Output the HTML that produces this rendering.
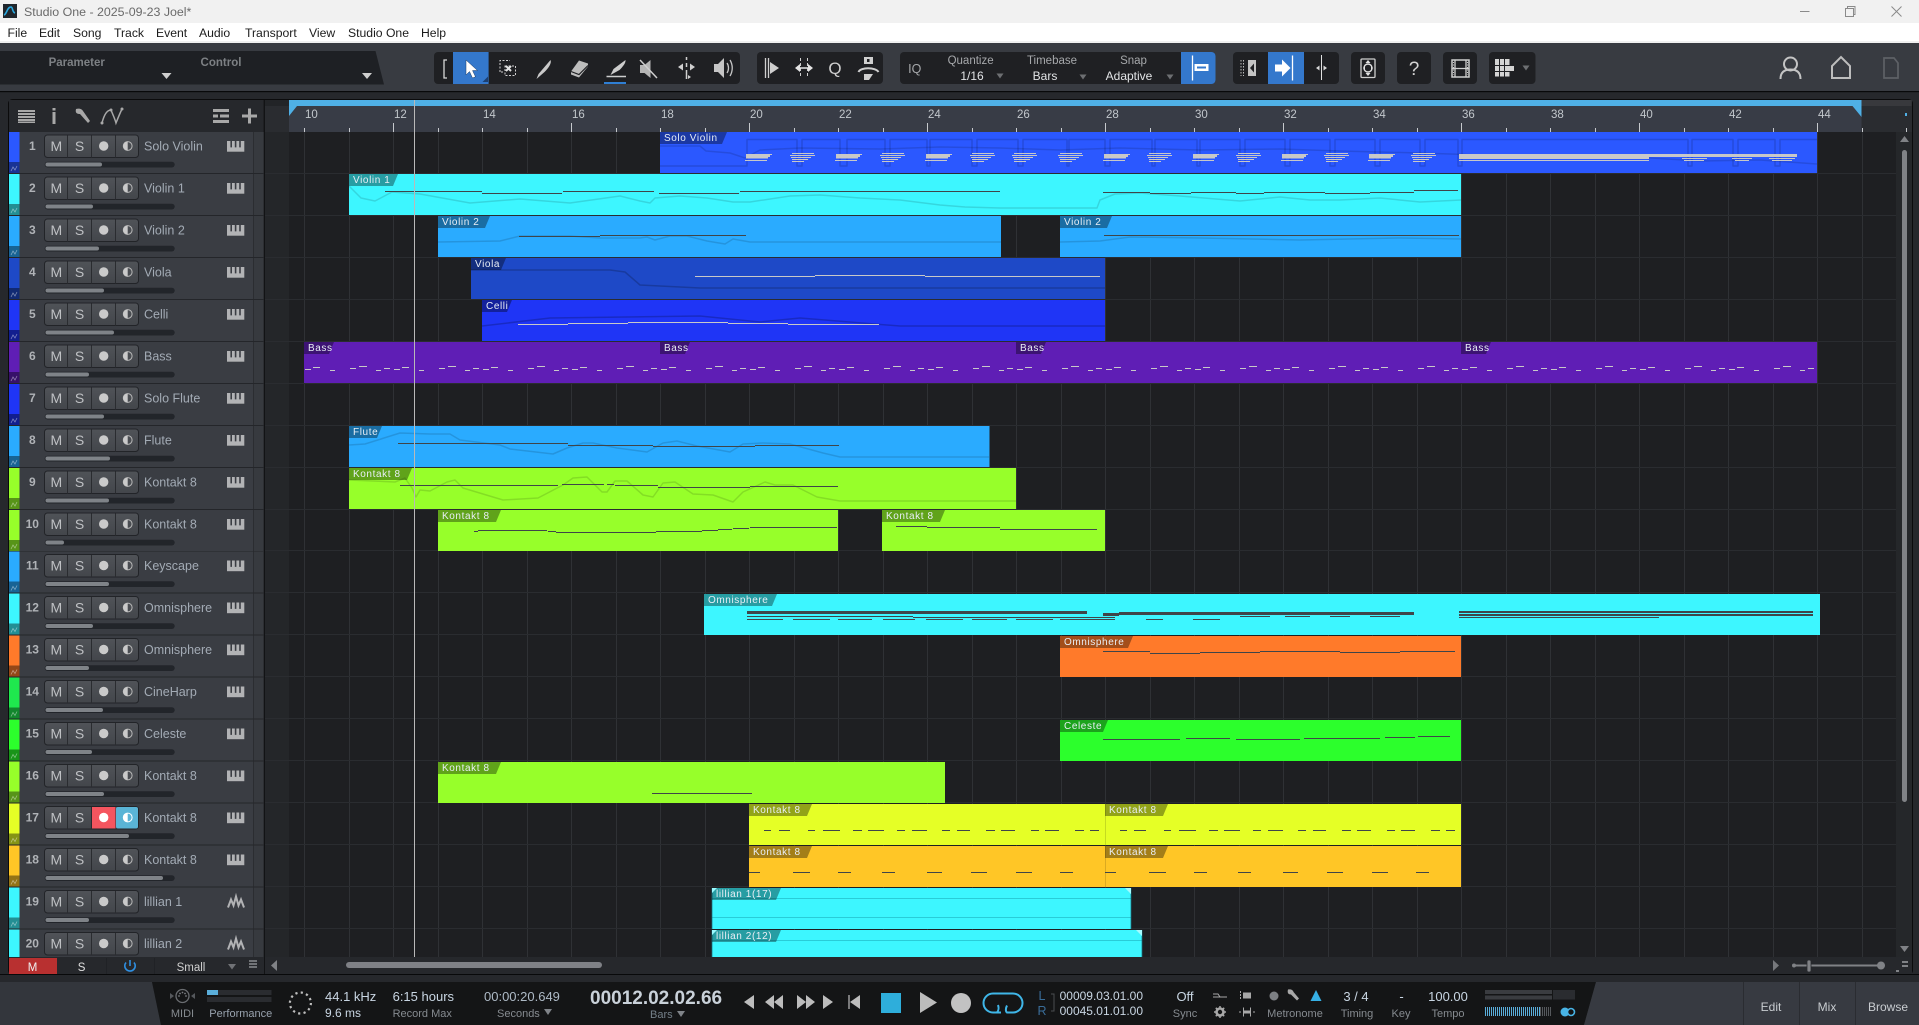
<!DOCTYPE html>
<html><head><meta charset="utf-8"><title>Studio One - 2025-09-23 Joel*</title>
<style>
html,body{margin:0;padding:0;background:#26282c;width:1919px;height:1025px;overflow:hidden}
svg{display:block;position:absolute;left:0;top:0}
text{font-family:"Liberation Sans",sans-serif;white-space:pre}
.m{font-size:12.2px;fill:#1c1c1c}
.n{font-size:12px;font-weight:bold;fill:#b0b3b7;text-anchor:middle}
.b{font-size:14px;fill:#bfc1c4;text-anchor:middle}
.tn{font-size:12.5px;fill:#a3abb5}
.l{font-size:10px;letter-spacing:.6px;fill:#e8eef5}
.rl{font-size:11.5px;fill:#c2c7cc}
.tb{font-size:11.5px;fill:#a6a8ab;text-anchor:middle}
.tv{font-size:12px;fill:#e2e4e6;text-anchor:middle}
.v{font-size:13px;fill:#c9d6e3}
.s{font-size:11px;fill:#868b90}
.sm{font-size:11px;fill:#868b90;text-anchor:middle}
.vm{font-size:13px;fill:#c9d6e3;text-anchor:middle}
</style></head><body>
<svg width="1919" height="1025" viewBox="0 0 1919 1025" xmlns="http://www.w3.org/2000/svg">
<defs>
<linearGradient id="bt" x1="0" y1="0" x2="0" y2="1"><stop offset="0" stop-color="#505358"/><stop offset="1" stop-color="#43464b"/></linearGradient>
<g id="r">
<rect x="19.5" width="244" height="42" fill="#3a3d43"/>
<rect x="253" width="10" height="42" fill="#373a3f"/>
<rect x="253" width="1" height="42" fill="#2b2d31"/>
<rect x="9" y="41" width="255" height="1" fill="#24262a"/>
<rect x="9" y="30" width="10.5" height="11" fill="#000" opacity=".42"/>
<path d="M11 39l2-4 2 3 2-4" fill="none" stroke="#fff" stroke-opacity=".45" stroke-width=".8"/>
<rect x="44.5" y="3" width="94" height="22.5" rx="3" fill="url(#bt)" stroke="#222428"/>
<path d="M67.5 3.5v22M91.5 3.5v22M115.5 3.5v22" stroke="#2a2c30" stroke-width="1"/>
<circle cx="103.7" cy="14" r="4.7" fill="#cacaca"/>
<circle cx="127.7" cy="14" r="4.4" fill="none" stroke="#b8b8b8"/>
<path d="M127.7 9.5a4.5 4.5 0 0 0 0 9z" fill="#cacaca"/>
<rect x="44.7" y="29.7" width="130" height="5.8" rx="2.9" fill="#22252a"/>
</g>
<g id="p"><rect x="227" y="9" width="17.3" height="10.7" fill="#b2b3b5"/><path d="M231.2 9v6.4M235.6 9v6.4M240 9v6.4" stroke="#3a3d43" stroke-width="1.6"/></g>
<path id="w" fill="none" stroke="#b2b3b5" stroke-width="2" d="M228 20L231 12 233.500 18 236 9 238.500 18 241 12 244 20"/>
<g id="c1" fill="#c8c8c8"><rect x="1" y="154" width="26" height="1"/><rect x="1" y="155" width="24" height="2"/><rect x="1" y="157" width="22" height="1.5"/><rect y="160" width="22" height="1"/></g>
<g id="c2" fill="#c8c8c8"><rect x="2" y="153" width="22" height="1"/><rect x="0" y="155" width="25" height="1"/><rect x="1" y="157" width="20" height="1"/><rect x="2" y="159" width="16" height="1"/><rect x="2" y="161" width="12" height="1"/></g>
<pattern id="bass" x="304" y="360" width="89" height="16" patternUnits="userSpaceOnUse">
<rect x="1" y="9" width="6" height="1" fill="#c8c8c8"/><rect x="9" y="7" width="7" height="1" fill="#c8c8c8"/><rect x="26" y="10" width="5" height="1" fill="#c8c8c8"/><rect x="46" y="8" width="6" height="1" fill="#c8c8c8"/><rect x="55" y="6" width="8" height="1" fill="#c8c8c8"/><rect x="72" y="10" width="5" height="1" fill="#c8c8c8"/><rect x="80" y="8" width="6" height="1" fill="#c8c8c8"/>
</pattern>
</defs>

<rect width="1919" height="1025" fill="#26282c"/>
<!-- title + menu -->
<rect width="1919" height="23" fill="#f1f1f1"/>
<rect y="23" width="1919" height="18" fill="#fff"/>
<rect y="41" width="1919" height="2" fill="#f0f0f0"/>
<rect x="3" y="4" width="14" height="14" fill="#20262c"/>
<path d="M4 15c3-1 3-8 7-8 2 0 1 5 4 6" fill="none" stroke="#2aa9e0" stroke-width="1.6"/>
<text x="24" y="16" font-size="12.4" fill="#6a6a6a">Studio One - 2025-09-23 Joel*</text>
<path d="M1800 11.5h9.5" stroke="#8a8a8a"/>
<path d="M1845.5 8.5h8v8h-8zM1847.5 8.500v-2h7.500v8h-2" fill="none" stroke="#8a8a8a"/>
<path d="M1891.500 6.500l10 10M1901.500 6.500l-10 10" stroke="#8a8a8a"/>
<text class="m" x="7.500" y="37">File</text><text class="m" x="39" y="37">Edit</text><text class="m" x="73" y="37">Song</text><text class="m" x="114" y="37">Track</text><text class="m" x="156" y="37">Event</text><text class="m" x="199" y="37">Audio</text><text class="m" x="245" y="37">Transport</text><text class="m" x="309" y="37">View</text><text class="m" x="348" y="37">Studio One</text><text class="m" x="421" y="37">Help</text>

<!-- toolbar -->
<rect y="43" width="1919" height="48" fill="#383b41"/>
<rect y="91" width="1919" height="1.200" fill="#08090a"/>
<path d="M0 51H375.500L384 84.500H0Z" fill="#1e2024"/>
<text x="76.700" y="66" font-size="11.500" font-weight="bold" fill="#7d8084" text-anchor="middle">Parameter</text>
<text x="221" y="66" font-size="11.500" font-weight="bold" fill="#7d8084" text-anchor="middle">Control</text>
<path d="M161.500 73h10l-5 6zM362 73h10l-5 6z" fill="#cfcfcf"/>

<g fill="#1f2023">
<rect x="434" y="52" width="306" height="32" rx="4"/>
<rect x="757" y="52" width="126" height="32" rx="4"/>
<rect x="900" y="52" width="315.500" height="32" rx="4"/>
<rect x="1233" y="52" width="106" height="32" rx="4"/>
<rect x="1351" y="52" width="34" height="32" rx="4"/>
<rect x="1397" y="52" width="34" height="32" rx="4"/>
<rect x="1443" y="52" width="34" height="32" rx="4"/>
<rect x="1489" y="52" width="46.500" height="32" rx="4"/>
</g>
<rect x="453" y="52" width="35.600" height="32" fill="#3478cc"/>
<path d="M482.500 82h5.500v-5.500z" fill="#1c3f70"/>
<path d="M447 60h-3v18h3" fill="none" stroke="#d8d8d8" stroke-width="1.300"/>
<path d="M466 60V75L469.500 71.500 472.500 78 475.500 76.700 472.500 70.500H477.500Z" fill="#fff" stroke="#1d3d66" stroke-width=".5"/>
<path d="M500 72V60.500H510M503 72H500" fill="none" stroke="#d0d0d0" stroke-dasharray="2 1.500"/>
<path d="M505 66h10.500v9.500H505z" fill="none" stroke="#d0d0d0" stroke-dasharray="2 1.500"/>
<path d="M506 66l5 5M511 66l-5 5" stroke="#e4e4e4" stroke-width="2"/>
<path d="M550.500 60c1.500 3-2 8-6 12l-8 7 2-5z" fill="#c9c9c9"/>
<path d="M579 60.500l9 3v3l-9 11-8-3v-3z" fill="#bdbdbd"/>
<path d="M571 71.500l8 3 9-9" fill="none" stroke="#1f2023" stroke-width="1.200"/>
<path d="M625.500 60c.5 3-3 7-6 10l-9 5 3-6z" fill="#cdcdcd"/>
<path d="M606.500 76.500h19.500" stroke="#cdcdcd" stroke-width="1.500"/>
<rect x="604" y="82" width="22" height="2" fill="#2f7fd4"/>
<path d="M640 65h4.500l6-5v18l-6-5H640z" fill="#b5b5b5"/>
<path d="M640 60l17 18" stroke="#cfcfcf" stroke-width="1.500"/>
<path d="M686.500 57v3M686.500 63v4M686.500 70v9" stroke="#d0d0d0" stroke-width="1.500"/>
<path d="M678 67l5-3.500v7zM695 67l-5-3.500v7zM688 75l3 2-3 2z" fill="#d0d0d0"/>
<path d="M714 64h4l6-6v20l-6-6h-4z" fill="#c6c6c6"/>
<path d="M727 63c2 3 2 7 0 10M730 60c3 5 3 11 0 16" fill="none" stroke="#c6c6c6" stroke-width="1.300"/>

<path d="M765.500 58v20M768.500 58v20" stroke="#cfcfcf" stroke-width="1.300"/>
<path d="M770 62l9 6-9 6z" fill="#cfcfcf"/>
<path d="M800.500 58v20M807.500 58v20" stroke="#cfcfcf" stroke-dasharray="3 2"/>
<path d="M795 68l5-4v8zM813 68l-5-4v8z" fill="#e4e4e4"/><path d="M798 68h12" stroke="#e4e4e4" stroke-width="1.500"/>
<text x="835" y="74" font-size="17" fill="#cfcfcf" text-anchor="middle">Q</text>
<path d="M864 57h9v7h-9z" fill="#cfcfcf"/><rect x="867" y="59" width="2.500" height="3" fill="#1f2023"/>
<path d="M858.500 72c2-5 17-5 20 0" fill="none" stroke="#cfcfcf" stroke-width="2"/>
<path d="M864 74h9l-4 6h-5z" fill="#cfcfcf"/>

<text x="914.700" y="73" font-size="12.500" fill="#a6a8ab" text-anchor="middle">IQ</text>
<text class="tb" x="970.600" y="64">Quantize</text><text class="tv" x="972" y="80">1/16</text>
<text class="tb" x="1052" y="64">Timebase</text><text class="tv" x="1045" y="80">Bars</text>
<text class="tb" x="1133.500" y="64">Snap</text><text class="tv" x="1129" y="80">Adaptive</text>
<path d="M996.500 73.500h7l-3.500 5zM1079.500 74.500h7l-3.500 5zM1166.500 74.500h7l-3.500 5z" fill="#6d6f72"/>
<path d="M1181 52h30.500a4 4 0 0 1 4 4v24a4 4 0 0 1-4 4H1181z" fill="#3478cc"/>
<path d="M1192.500 55.500v25" stroke="#fff" stroke-width="1.300"/>
<rect x="1194.500" y="64" width="14" height="7" fill="#fff"/><rect x="1197" y="66.500" width="9" height="2" fill="#3478cc"/>

<path d="M1241 60v16M1243.500 60v16" stroke="#bbb" stroke-dasharray="1.500 1.500"/>
<rect x="1248" y="60" width="8" height="16" fill="#c4c4c4"/><path d="M1254 63.500l-4 4.500 4 4.500z" fill="#1f2023"/>
<rect x="1268" y="52" width="36" height="32" fill="#3478cc"/>
<path d="M1275 64.500h7v-5l8.500 8.500-8.500 8.500v-5h-7z" fill="#fff"/>
<path d="M1292.500 55.500v25" stroke="#fff" stroke-width="1.300"/>
<path d="M1321.500 55v25" stroke="#e0e0e0" stroke-width="1"/>
<path d="M1316 68l3.500-2.500v5zM1327 68l-3.500-2.500v5z" fill="#d8d8d8"/>
<rect x="1361" y="59" width="14" height="18.500" rx="1" fill="none" stroke="#cfcfcf" stroke-width="1.300"/>
<circle cx="1368" cy="68" r="4" fill="none" stroke="#e2e2e2" stroke-width="1.400"/>
<path d="M1368 60l2.500 3h-5zM1368 76l2.500-3h-5zM1363 68l2-2v4zM1373 68l-2-2v4z" fill="#e2e2e2"/>
<text x="1414" y="75" font-size="19" fill="#d4d4d4" text-anchor="middle">?</text>
<rect x="1452" y="60" width="17" height="17" fill="none" stroke="#cfcfcf" stroke-width="1.500"/>
<path d="M1455 60v17M1466 60v17M1452 68.500h17" stroke="#cfcfcf" stroke-width="1.300"/>
<path d="M1453.500 62v13M1467.500 62v13" stroke="#cfcfcf" stroke-dasharray="1 1.500"/>
<g fill="#d4d4d4"><rect x="1495" y="59" width="4" height="6"/><rect x="1500" y="59" width="4" height="6"/><rect x="1495" y="66" width="4" height="5"/><rect x="1500" y="66" width="4" height="5"/><rect x="1495" y="72" width="4" height="4.500"/><rect x="1500" y="72" width="4" height="4.500"/><rect x="1505" y="59" width="4.500" height="6"/><rect x="1505" y="66" width="9" height="5"/><rect x="1505" y="72" width="4.500" height="4.500"/></g>
<path d="M1522.500 65.500h7l-3.500 5z" fill="#6d6f72"/>

<circle cx="1790.500" cy="64" r="6.500" fill="none" stroke="#c4c4c4" stroke-width="2"/>
<path d="M1780.500 79c0-7 4-9.500 10-9.500s10 2.500 10 9.500" fill="none" stroke="#c4c4c4" stroke-width="2"/>
<path d="M1832 78V66l9-9 9 9v12z" fill="none" stroke="#bdbdbd" stroke-width="2"/>
<path d="M1884 58h10l4 5v15h-14z" fill="none" stroke="#5e6166" stroke-width="1.700"/>

<!-- panel -->
<rect x="8.500" y="99.500" width="1904" height="875" rx="4" fill="#1e1f22" stroke="#0b0b0c"/>
<rect x="9" y="100" width="254" height="32" fill="#26282c"/>
<g fill="#a8a8a8">
<rect x="18" y="110" width="17" height="2"/><rect x="18" y="113" width="17" height="2"/><rect x="18" y="116" width="17" height="2"/><rect x="18" y="119" width="17" height="2"/><rect x="18" y="121.500" width="17" height="1.500"/>
<rect x="52.500" y="108" width="3" height="2.500"/><rect x="52.500" y="112" width="3" height="12"/>
<rect x="213" y="109" width="16" height="3"/><rect x="213" y="114.500" width="5" height="3"/><rect x="220" y="114.500" width="9" height="3"/><rect x="213" y="120" width="16" height="3"/>
<rect x="242" y="114.500" width="15" height="3"/><rect x="248" y="108.500" width="3" height="15"/>
</g>
<path d="M76 109c3-1 6 0 7 2l7 10-2 2-8-9c-3 0-5-1-4-5z" fill="#a8a8a8"/>
<path d="M102 123c2-8 5-13 9-13 2 5 4 9 5 13 2-5 4-10 6-14" fill="none" stroke="#a8a8a8" stroke-width="1.500"/>
<circle cx="102" cy="123" r="1.500" fill="#a8a8a8"/><circle cx="111" cy="110" r="1.500" fill="#a8a8a8"/><circle cx="122" cy="109" r="1.500" fill="#a8a8a8"/>

<!-- ruler -->
<rect x="264" y="100" width="1648" height="32" fill="#2a2c30"/>
<rect x="264" y="100" width="25" height="6" fill="#222427"/>
<rect x="1861.500" y="100" width="50" height="6" fill="#38393d"/>
<rect x="289" y="106" width="1572.500" height="26" fill="#383c46"/>
<rect x="289" y="100" width="1572.500" height="6" fill="#4fb0e6"/>
<path d="M289 106h8l-8 10zM1861.500 106h-9l9 11z" fill="#4fb0e6"/>
<path d="M1907 113h-2v3h2z" fill="#4fb0e6"/>
<!-- grid -->
<rect x="264" y="132" width="25" height="825" fill="#242629"/>
<rect x="1896" y="132" width="16" height="825" fill="#25272a"/>
<path shape-rendering="crispEdges" stroke="#2f3135" d="M304.500 132V957M349.500 132V957M393.500 132V957M438.500 132V957M482.500 132V957M527.500 132V957M571.500 132V957M616.500 132V957M660.500 132V957M705.500 132V957M749.500 132V957M794.500 132V957M838.500 132V957M883.500 132V957M927.500 132V957M972.500 132V957M1016.500 132V957M1061.500 132V957M1105.500 132V957M1150.500 132V957M1194.500 132V957M1239.500 132V957M1283.500 132V957M1328.500 132V957M1372.500 132V957M1417.500 132V957M1461.500 132V957M1506.500 132V957M1550.500 132V957M1595.500 132V957M1639.500 132V957M1684.500 132V957M1728.500 132V957M1773.500 132V957M1817.500 132V957M1862.500 132V957"/>
<path shape-rendering="crispEdges" stroke="#2a2c30" d="M264 173.500H1896M264 215.500H1896M264 257.500H1896M264 299.500H1896M264 341.500H1896M264 383.500H1896M264 425.500H1896M264 467.500H1896M264 509.500H1896M264 550.500H1896M264 592.500H1896M264 634.500H1896M264 676.500H1896M264 718.500H1896M264 760.500H1896M264 802.500H1896M264 844.500H1896M264 886.500H1896M264 928.500H1896"/>
<!-- ticks -->
<path shape-rendering="crispEdges" stroke="#c6c9cd" d="M304.500 128V132M349.500 128V132M438.500 128V132M482.500 128V132M527.500 128V132M616.500 128V132M660.500 128V132M705.500 128V132M794.500 128V132M838.500 128V132M883.500 128V132M972.500 128V132M1016.500 128V132M1061.500 128V132M1150.500 128V132M1194.500 128V132M1239.500 128V132M1328.500 128V132M1372.500 128V132M1417.500 128V132M1506.500 128V132M1550.500 128V132M1595.500 128V132M1684.500 128V132M1728.500 128V132M1773.500 128V132M1862.500 128V132M1906.500 128V132M393.500 123V132M571.500 123V132M749.500 123V132M927.500 123V132M1105.500 123V132M1283.500 123V132M1461.500 123V132M1639.500 123V132M1817.500 123V132"/>
<g class="rl">
<text class="rl" x="305" y="118">10</text><text class="rl" x="394" y="118">12</text><text class="rl" x="483" y="118">14</text><text class="rl" x="572" y="118">16</text><text class="rl" x="661" y="118">18</text><text class="rl" x="750" y="118">20</text><text class="rl" x="839" y="118">22</text><text class="rl" x="928" y="118">24</text><text class="rl" x="1017" y="118">26</text><text class="rl" x="1106" y="118">28</text><text class="rl" x="1195" y="118">30</text><text class="rl" x="1284" y="118">32</text><text class="rl" x="1373" y="118">34</text><text class="rl" x="1462" y="118">36</text><text class="rl" x="1551" y="118">38</text><text class="rl" x="1640" y="118">40</text><text class="rl" x="1729" y="118">42</text><text class="rl" x="1818" y="118">44</text>
</g>

<!-- clips -->
<g shape-rendering="crispEdges">
<rect x="660" y="132" width="1157" height="41" fill="#2b58ff"/>
<rect x="349" y="174" width="1112" height="41" fill="#3df6ff"/>
<rect x="438" y="216" width="563" height="41" fill="#2aabff"/>
<rect x="1060" y="216" width="401" height="41" fill="#2aabff"/>
<rect x="471" y="258" width="634" height="41" fill="#1e49c7"/>
<rect x="482" y="300" width="623" height="41" fill="#1f35f6"/>
<rect x="304" y="342" width="1513" height="41" fill="#5f1eb5"/>
<rect x="349" y="426" width="640.500" height="41" fill="#2aabff"/>
<rect x="349" y="468" width="667" height="41" fill="#97ff2a"/>
<rect x="438" y="510" width="400" height="41" fill="#97ff2a"/>
<rect x="882" y="510" width="223" height="41" fill="#97ff2a"/>
<rect x="704" y="594" width="1116" height="41" fill="#3df6ff"/>
<rect x="1060" y="636" width="401" height="41" fill="#ff7a2a"/>
<rect x="1060" y="720" width="401" height="41" fill="#2cff2c"/>
<rect x="438" y="762" width="507" height="41" fill="#97ff2a"/>
<rect x="749" y="804" width="712" height="41" fill="#e5ff26"/>
<rect x="749" y="846" width="712" height="41" fill="#ffc626"/>
<rect x="712" y="888" width="419" height="41" fill="#3df6ff"/>
<rect x="712" y="930" width="430" height="30" fill="#3df6ff"/>
<path d="M1105.500 804V845M1105.500 846V887" stroke="#000" stroke-opacity=".14"/>
</g>

<!-- automation curves -->
<g fill="none" stroke="#000" stroke-opacity=".13" stroke-width="1.500" stroke-linejoin="round">
<path stroke-opacity=".14" d="M660 166H747V139.500H797V166H802V139.500H840V166H847V139.500H885V166H890V139.500H927V166H930V139.500H972V166H977V139.500H1018V166H1023V139.500H1067V166H1069V139.500H1105V166H1110V139.500H1152V166H1155V139.500H1197V166H1200V139.500H1240V166H1245V139.500H1285V166H1290V139.500H1330V166H1335V139.500H1375V166H1380V139.500H1420V166H1425V139.500H1458V166H1462V139.500H1688V166H1692V139.500H1733V166H1738V139.500H1775V166H1780V139.500H1817"/>
<path d="M660 146H700L706 151 730 153 745 158 760 150 800 148 880 149 940 147 1000 148 1060 150 1120 148 1200 150 1280 149 1340 151 1420 153 1480 155 1600 156 1650 158 1700 161 1760 160 1817 164"/>
<path d="M349 186 361 198 375 201 392 192 420 194 470 203 520 199 570 203 620 196 640 201 650 203 655 198 680 196 707 198 733 202 750 202 790 196 820 195 860 198 900 200 940 205 965 207 1000 208 1097 208 1100 200 1115 194 1140 193 1180 196 1240 201 1280 197 1310 200 1340 200 1380 198 1420 202 1461 200"/>
<path d="M438 242 500 241 520 236 570 236 600 238 640 238 647 237 655 240 670 236 687 236 707 241 725 244 733 239 750 242 1001 242"/>
<path d="M1060 242 1100 241 1130 237 1200 238 1300 240 1400 238 1461 239"/>
<path stroke-opacity=".2" d="M471 270 610 270 625 272 640 285 700 288 1105 288"/>
<path stroke-opacity=".2" d="M482 326 550 318 700 316 760 322 800 318 900 326 1105 326"/>
<path d="M349 445 365 444 400 433 430 434 450 434 460 440 500 445 510 449 553 454 567 448 583 443 593 443 617 448 647 452 663 443 677 441 697 446 730 452 743 444 763 443 790 444 823 453 840 457 989 457"/>
<path d="M349 480 395 482 405 478 412 488 416 497 420 490 430 491 447 482 455 480 463 488 503 500 538 498 563 485 573 478 587 477 602 492 607 492 615 481 627 481 643 495 653 497 663 483 675 482 693 494 713 495 733 502 743 492 765 482 775 485 793 485 817 497 840 501 1016 501"/>
<path d="M712 898.500H1131M712 917.500H1131M712 940.500H1142" stroke="#1aa9b8" stroke-opacity=".55" stroke-width="1"/>
<path d="M712 888V929M1131 888V929M712 930V957M1142 930V957" stroke="#1a6f7f" stroke-opacity=".75" stroke-width="1"/>
</g>

<!-- notes -->
<g fill="#c8c8c8">
<use href="#c1" x="745"/><use href="#c2" x="790"/><use href="#c1" x="835"/><use href="#c2" x="880"/><use href="#c1" x="925"/><use href="#c2" x="970"/><use href="#c2" x="1012"/><use href="#c2" x="1058"/><use href="#c1" x="1103"/><use href="#c2" x="1147"/><use href="#c1" x="1192"/><use href="#c2" x="1236"/><use href="#c1" x="1281"/><use href="#c2" x="1324"/><use href="#c1" x="1368"/><use href="#c2" x="1411"/>
<rect x="1459" y="154" width="190" height="5"/><rect x="1459" y="160" width="190" height="1"/>
<rect x="1649" y="154" width="148" height="3"/>
<rect x="1682" y="158" width="25" height="1"/><rect x="1684" y="160" width="20" height="1"/>
<rect x="1732" y="158" width="20" height="1"/><rect x="1735" y="160" width="14" height="1"/>
<rect x="1769" y="158" width="26" height="1"/><rect x="1772" y="160" width="20" height="1"/>
<rect x="695" y="276" width="120" height="1"/><rect x="815" y="275" width="110" height="1"/><rect x="925" y="276" width="175" height="1"/>
<rect x="518" y="324" width="50" height="1"/><rect x="568" y="323" width="60" height="1"/><rect x="628" y="322" width="100" height="1"/><rect x="728" y="323" width="60" height="1"/><rect x="788" y="324" width="91" height="1"/>
<rect x="304" y="360" width="1513" height="16" fill="url(#bass)"/>
</g>
<path shape-rendering="crispEdges" fill="none" stroke="#3f4549" d="M385 191.500H482M482 193.500H562M563 191.500H654M659 193.500H739M740 191.500H1000M1103 192.500H1150M1150 193.500H1191M1191 192.500H1236M1236 193.500H1264M1264 192.500H1325M1325 193.500H1370M1370 192.500H1414M1414 190.500H1458
M519 236.500H600M600 235.500H746M1104 235.500H1459
M398 443.500H568M568 445.500H653M653 446.500H755M755 445.500H839
M400 485.500H558M562 484.500H604M607 484.500H614M615 485.500H658M658 487.500H750M750 486.500H838
M474 531.500H478M478 530.500H547M548 531.500H556M556 532.500H656M656 531.500H702M702 530.500H718M718 529.500H732M733 528.500H749M750 527.500H837M896 526.500H927M927 527.500H1000M1000 529.500H1097
M747 616.500H913M913 617.500H1115M747 619.500H783M793 619.500H830M838 619.500H872M883 619.500H915M926 619.500H963M972 619.500H1007M1016 619.500H1053M1060 619.500H1115M1146 619.500H1163M1193 619.500H1220M1240 616.500H1270M1285 616.500H1310M1330 616.500H1350M1370 616.500H1400
M1103 651.500H1150M1150 653.500H1200M1200 652.500H1260M1260 651.500H1340M1340 652.500H1400M1400 651.500H1455
M1103 739.500H1180M1186 738.500H1230M1236 739.500H1300M1304 738.500H1380M1385 737.500H1415M1418 736.500H1450
M652 793.500H752
M764 830.500H771M779 830.500H790M808 830.500H815M823 830.500H840M853 830.500H862M868 830.500H884M897 830.500H905M912 830.500H927M942 830.500H950M957 830.500H970M986 830.500H995M1001 830.500H1015M1031 830.500H1039M1045 830.500H1059M1075 830.500H1084M1090 830.500H1099M1120 830.500H1127M1134 830.500H1146M1164 830.500H1171M1179 830.500H1196M1209 830.500H1218M1224 830.500H1240M1253 830.500H1261M1268 830.500H1283M1298 830.500H1306M1313 830.500H1326M1342 830.500H1351M1357 830.500H1371M1387 830.500H1395M1401 830.500H1415M1431 830.500H1440M1446 830.500H1455
M749 872.500H760M793 872.500H810M838 872.500H851M882 872.500H895M927 872.500H942M971 872.500H987M1016 872.500H1032M1060 872.500H1073M1105 872.500H1116M1149 872.500H1166M1194 872.500H1207M1238 872.500H1251M1283 872.500H1298M1327 872.500H1343M1372 872.500H1388M1416 872.500H1429"/>
<g fill="#3f4549">
<rect x="747" y="611" width="340" height="3"/><rect x="1103" y="613" width="16" height="3"/><rect x="1119" y="612" width="295" height="3"/>
<rect x="1459" y="611" width="354" height="2"/><rect x="1459" y="614" width="354" height="2"/><rect x="1459" y="617" width="200" height="1"/>
</g>

<!-- clip labels -->
<g fill="#000" fill-opacity=".36">
<path d="M660 132h67l-5 12h-62z"/><path d="M349 174h49l-5 12h-44z"/><path d="M438 216h52l-5 12h-47z"/><path d="M1060 216h52l-5 12h-47z"/><path d="M471 258h35l-5 12h-30z"/><path d="M482 300h30l-5 12h-25z"/>
<path d="M304 342h30l-5 12h-25z"/><path d="M660 342h30l-5 12h-25z"/><path d="M1016 342h30l-5 12h-25z"/><path d="M1461 342h30l-5 12h-25z"/>
<path d="M349 426h33l-5 12h-28z"/><path d="M349 468h63l-5 12h-58z"/><path d="M438 510h63l-5 12h-58z"/><path d="M882 510h63l-5 12h-58z"/>
<path d="M704 594h73l-5 12h-68z"/><path d="M1060 636h73l-5 12h-68z"/><path d="M1060 720h48l-5 12h-43z"/><path d="M438 762h63l-5 12h-58z"/>
<path d="M749 804h63l-5 12h-58z"/><path d="M1105 804h63l-5 12h-58z"/><path d="M749 846h63l-5 12h-58z"/><path d="M1105 846h63l-5 12h-58z"/>
<path d="M712 888h69l-5 12h-64z"/><path d="M712 930h69l-5 12h-64z"/>
</g>
<path d="M712 893v-5h5zM712 935v-5h5z" fill="#9bfaff"/>
<path d="M1131 888v6l-6-6zM1142 930v6l-6-6z" fill="#a7fbff"/>
<text class="l" x="664" y="141">Solo Violin</text><text class="l" x="353" y="183">Violin 1</text><text class="l" x="442" y="225">Violin 2</text><text class="l" x="1064" y="225">Violin 2</text><text class="l" x="475" y="267">Viola</text><text class="l" x="486" y="309">Celli</text>
<text class="l" x="308" y="351">Bass</text><text class="l" x="664" y="351">Bass</text><text class="l" x="1020" y="351">Bass</text><text class="l" x="1465" y="351">Bass</text>
<text class="l" x="353" y="435">Flute</text><text class="l" x="353" y="477">Kontakt 8</text><text class="l" x="442" y="519">Kontakt 8</text><text class="l" x="886" y="519">Kontakt 8</text>
<text class="l" x="708" y="603">Omnisphere</text><text class="l" x="1064" y="645">Omnisphere</text><text class="l" x="1064" y="729">Celeste</text><text class="l" x="442" y="771">Kontakt 8</text>
<text class="l" x="753" y="813">Kontakt 8</text><text class="l" x="1109" y="813">Kontakt 8</text><text class="l" x="753" y="855">Kontakt 8</text><text class="l" x="1109" y="855">Kontakt 8</text>
<text class="l" x="716" y="897">lillian 1(17)</text><text class="l" x="716" y="939">lillian 2(12)</text>

<!-- playhead -->
<path shape-rendering="crispEdges" d="M414.500 100V957" stroke="#b9b9b9"/>

<!-- tracks -->
<g transform="translate(0,132)"><rect x="9" width="10.500" height="42" fill="#2b58ff"/><use href="#r"/><rect x="45.500" y="30.500" width="56.500" height="4" rx="2" fill="#7f8388"/><text class="n" x="32.300" y="18">1</text><text class="b" x="56.300" y="19">M</text><text class="b" x="79.500" y="19">S</text><text class="tn" x="144" y="18.500">Solo Violin</text><use href="#p"/></g>
<g transform="translate(0,174)"><rect x="9" width="10.500" height="42" fill="#3df6ff"/><use href="#r"/><rect x="45.500" y="30.500" width="47.500" height="4" rx="2" fill="#7f8388"/><text class="n" x="32.300" y="18">2</text><text class="b" x="56.300" y="19">M</text><text class="b" x="79.500" y="19">S</text><text class="tn" x="144" y="18.500">Violin 1</text><use href="#p"/></g>
<g transform="translate(0,216)"><rect x="9" width="10.500" height="42" fill="#2aabff"/><use href="#r"/><rect x="45.500" y="30.500" width="53.500" height="4" rx="2" fill="#7f8388"/><text class="n" x="32.300" y="18">3</text><text class="b" x="56.300" y="19">M</text><text class="b" x="79.500" y="19">S</text><text class="tn" x="144" y="18.500">Violin 2</text><use href="#p"/></g>
<g transform="translate(0,258)"><rect x="9" width="10.500" height="42" fill="#1e49c7"/><use href="#r"/><rect x="45.500" y="30.500" width="58.500" height="4" rx="2" fill="#7f8388"/><text class="n" x="32.300" y="18">4</text><text class="b" x="56.300" y="19">M</text><text class="b" x="79.500" y="19">S</text><text class="tn" x="144" y="18.500">Viola</text><use href="#p"/></g>
<g transform="translate(0,300)"><rect x="9" width="10.500" height="42" fill="#1f35f6"/><use href="#r"/><rect x="45.500" y="30.500" width="68.500" height="4" rx="2" fill="#7f8388"/><text class="n" x="32.300" y="18">5</text><text class="b" x="56.300" y="19">M</text><text class="b" x="79.500" y="19">S</text><text class="tn" x="144" y="18.500">Celli</text><use href="#p"/></g>
<g transform="translate(0,342)"><rect x="9" width="10.500" height="42" fill="#5f1eb5"/><use href="#r"/><rect x="45.500" y="30.500" width="43.500" height="4" rx="2" fill="#7f8388"/><text class="n" x="32.300" y="18">6</text><text class="b" x="56.300" y="19">M</text><text class="b" x="79.500" y="19">S</text><text class="tn" x="144" y="18.500">Bass</text><use href="#p"/></g>
<g transform="translate(0,384)"><rect x="9" width="10.500" height="42" fill="#1f35f6"/><use href="#r"/><rect x="45.500" y="30.500" width="58.500" height="4" rx="2" fill="#7f8388"/><text class="n" x="32.300" y="18">7</text><text class="b" x="56.300" y="19">M</text><text class="b" x="79.500" y="19">S</text><text class="tn" x="144" y="18.500">Solo Flute</text><use href="#p"/></g>
<g transform="translate(0,426)"><rect x="9" width="10.500" height="42" fill="#2aabff"/><use href="#r"/><rect x="45.500" y="30.500" width="64.500" height="4" rx="2" fill="#7f8388"/><text class="n" x="32.300" y="18">8</text><text class="b" x="56.300" y="19">M</text><text class="b" x="79.500" y="19">S</text><text class="tn" x="144" y="18.500">Flute</text><use href="#p"/></g>
<g transform="translate(0,468)"><rect x="9" width="10.500" height="42" fill="#97ff2a"/><use href="#r"/><rect x="45.500" y="30.500" width="63.500" height="4" rx="2" fill="#7f8388"/><text class="n" x="32.300" y="18">9</text><text class="b" x="56.300" y="19">M</text><text class="b" x="79.500" y="19">S</text><text class="tn" x="144" y="18.500">Kontakt 8</text><use href="#p"/></g>
<g transform="translate(0,510)"><rect x="9" width="10.500" height="42" fill="#97ff2a"/><use href="#r"/><rect x="45.500" y="30.500" width="18.500" height="4" rx="2" fill="#7f8388"/><text class="n" x="32.300" y="18">10</text><text class="b" x="56.300" y="19">M</text><text class="b" x="79.500" y="19">S</text><text class="tn" x="144" y="18.500">Kontakt 8</text><use href="#p"/></g>
<g transform="translate(0,551.500)"><rect x="9" width="10.500" height="42" fill="#2aabff"/><use href="#r"/><rect x="45.500" y="30.500" width="63.500" height="4" rx="2" fill="#7f8388"/><text class="n" x="32.300" y="18">11</text><text class="b" x="56.300" y="19">M</text><text class="b" x="79.500" y="19">S</text><text class="tn" x="144" y="18.500">Keyscape</text><use href="#p"/></g>
<g transform="translate(0,593.500)"><rect x="9" width="10.500" height="42" fill="#3df6ff"/><use href="#r"/><rect x="45.500" y="30.500" width="47.500" height="4" rx="2" fill="#7f8388"/><text class="n" x="32.300" y="18">12</text><text class="b" x="56.300" y="19">M</text><text class="b" x="79.500" y="19">S</text><text class="tn" x="144" y="18.500">Omnisphere</text><use href="#p"/></g>
<g transform="translate(0,635.500)"><rect x="9" width="10.500" height="42" fill="#ff7a2a"/><use href="#r"/><rect x="45.500" y="30.500" width="43.500" height="4" rx="2" fill="#7f8388"/><text class="n" x="32.300" y="18">13</text><text class="b" x="56.300" y="19">M</text><text class="b" x="79.500" y="19">S</text><text class="tn" x="144" y="18.500">Omnisphere</text><use href="#p"/></g>
<g transform="translate(0,677.500)"><rect x="9" width="10.500" height="42" fill="#1fe84e"/><use href="#r"/><rect x="45.500" y="30.500" width="57.500" height="4" rx="2" fill="#7f8388"/><text class="n" x="32.300" y="18">14</text><text class="b" x="56.300" y="19">M</text><text class="b" x="79.500" y="19">S</text><text class="tn" x="144" y="18.500">CineHarp</text><use href="#p"/></g>
<g transform="translate(0,719.500)"><rect x="9" width="10.500" height="42" fill="#2cff2c"/><use href="#r"/><rect x="45.500" y="30.500" width="46.500" height="4" rx="2" fill="#7f8388"/><text class="n" x="32.300" y="18">15</text><text class="b" x="56.300" y="19">M</text><text class="b" x="79.500" y="19">S</text><text class="tn" x="144" y="18.500">Celeste</text><use href="#p"/></g>
<g transform="translate(0,761.500)"><rect x="9" width="10.500" height="42" fill="#97ff2a"/><use href="#r"/><rect x="45.500" y="30.500" width="58.500" height="4" rx="2" fill="#7f8388"/><text class="n" x="32.300" y="18">16</text><text class="b" x="56.300" y="19">M</text><text class="b" x="79.500" y="19">S</text><text class="tn" x="144" y="18.500">Kontakt 8</text><use href="#p"/></g>
<g transform="translate(0,803.500)"><rect x="9" width="10.500" height="42" fill="#e5ff26"/><use href="#r"/>
<rect x="92" y="3.500" width="23.500" height="21.500" fill="#f5555f"/><rect x="116" y="3.500" width="22" height="21.500" rx="2" fill="#5ab4d6"/>
<circle cx="103.700" cy="14" r="4.700" fill="#fff"/><circle cx="127.700" cy="14" r="4.400" fill="none" stroke="#fff"/><path d="M127.700 9.500a4.500 4.500 0 0 0 0 9z" fill="#fff"/>
<rect x="45.500" y="30.500" width="83.500" height="4" rx="2" fill="#7f8388"/><text class="n" x="32.300" y="18">17</text><text class="b" x="56.300" y="19">M</text><text class="b" x="79.500" y="19">S</text><text class="tn" x="144" y="18.500">Kontakt 8</text><use href="#p"/></g>
<g transform="translate(0,845.500)"><rect x="9" width="10.500" height="42" fill="#ffc626"/><use href="#r"/><rect x="45.500" y="30.500" width="117.500" height="4" rx="2" fill="#7f8388"/><text class="n" x="32.300" y="18">18</text><text class="b" x="56.300" y="19">M</text><text class="b" x="79.500" y="19">S</text><text class="tn" x="144" y="18.500">Kontakt 8</text><use href="#p"/></g>
<g transform="translate(0,887.500)"><rect x="9" width="10.500" height="42" fill="#3df6ff"/><use href="#r"/><rect x="45.500" y="30.500" width="43.500" height="4" rx="2" fill="#7f8388"/><text class="n" x="32.300" y="18">19</text><text class="b" x="56.300" y="19">M</text><text class="b" x="79.500" y="19">S</text><text class="tn" x="144" y="18.500">lillian 1</text><use href="#w"/></g>
<g transform="translate(0,929.500)"><rect x="9" width="10.500" height="42" fill="#3df6ff"/><use href="#r"/><text class="n" x="32.300" y="18">20</text><text class="b" x="56.300" y="19">M</text><text class="b" x="79.500" y="19">S</text><text class="tn" x="144" y="18.500">lillian 2</text><use href="#w"/></g>

<!-- bottom strip -->
<rect x="9" y="957" width="1903" height="17" fill="#26282c"/>
<rect x="264" y="100" width="1" height="874" fill="#121315"/>
<rect x="9" y="958" width="48" height="16" fill="#b83030"/>
<text x="32.600" y="971" font-size="11.500" fill="#f0f0f0" text-anchor="middle">M</text>
<text x="81.600" y="971" font-size="11.500" fill="#e0e0e0" text-anchor="middle">S</text>
<path d="M106.500 958v16M154.500 958v16" stroke="#202226"/>
<path d="M126 962.500a5.200 5.200 0 1 0 8 0" fill="none" stroke="#2f8fe0" stroke-width="1.600"/><path d="M130 960v6" stroke="#2f8fe0" stroke-width="1.600"/>
<text x="191" y="971" font-size="11.500" fill="#d0d0d0" text-anchor="middle">Small</text>
<path d="M228 964h8l-4 5.500z" fill="#707276"/>
<path d="M249 961h8M249 964h8M249 967h8" stroke="#8a8c90" stroke-width="1.600"/>
<path d="M277 960v11l-6-5.500z" fill="#808286"/>
<rect x="346" y="962" width="256" height="6" rx="3" fill="#7f8186"/>
<path d="M1773 960v11l6-5.500z" fill="#76787c"/>
<path d="M1793.500 965.500H1884" stroke="#808286" stroke-width="2"/>
<rect x="1807" y="960" width="4" height="12" rx="1.500" fill="#808286" stroke="#26282c" stroke-width=".8"/>
<circle cx="1881" cy="965.500" r="4" fill="#808286"/><circle cx="1794" cy="965.500" r="2" fill="#808286"/>
<path d="M1902 961h6v2h-6zM1902 965h6v2h-6zM1896 970h3v2h-3z" fill="#808286"/>
<!-- v scrollbar -->
<rect x="1896" y="132" width="16" height="825" fill="#25272a"/>
<path d="M1900 142l4.500-6 4.500 6z" fill="#808286"/>
<rect x="1902" y="150" width="5" height="652" rx="2.500" fill="#808286"/>
<path d="M1900 946l4.500 6 4.500-6z" fill="#808286"/>
<rect x="0" y="974" width="1919" height="1" fill="#08090a"/>
<rect x="0" y="975" width="1919" height="7" fill="#26282c"/>

<!-- transport -->
<path d="M0 982H152L161 1025H0Z" fill="#33363c"/>
<path d="M152 982H1596L1584 1025H161Z" fill="#141516"/>
<path d="M1596 982H1919V1025H1584Z" fill="#373a41"/>
<path d="M1743.500 982V1025M1799.500 982V1025M1855.500 982V1025" stroke="#2a2c31" shape-rendering="crispEdges"/>
<text x="1771" y="1011" font-size="12" fill="#c8ccd0" text-anchor="middle">Edit</text>
<text x="1827" y="1011" font-size="12" fill="#c8ccd0" text-anchor="middle">Mix</text>
<text x="1888" y="1011" font-size="12" fill="#c8ccd0" text-anchor="middle">Browse</text>

<circle cx="182.500" cy="996" r="6.500" fill="none" stroke="#6a6d71" stroke-width="1.300"/>
<path d="M174 996l-4-3v6zM191 996l4-3v6z" fill="#55585c"/>
<g fill="#7a7d81"><circle cx="179" cy="996" r=".9"/><circle cx="186" cy="996" r=".9"/><circle cx="182.500" cy="992.500" r=".9"/><circle cx="180" cy="993.500" r=".9"/><circle cx="185" cy="993.500" r=".9"/></g>
<text class="sm" x="182.500" y="1017">MIDI</text>
<rect x="207" y="990" width="64.500" height="5" fill="#2a2c30"/><rect x="207" y="997" width="64.500" height="5" fill="#2a2c30"/>
<rect x="207" y="990" width="11" height="5" fill="#5aaedb"/>
<text class="sm" x="240.800" y="1017" style="fill:#98a2ad">Performance</text>
<circle cx="300.400" cy="1003" r="10.500" fill="none" stroke="#bdbdbd" stroke-width="2.200" stroke-dasharray="2.200 3.300"/>
<text class="v" x="325" y="1001">44.1 kHz</text>
<text x="325" y="1017" font-size="12" fill="#c9d6e3">9.6 ms</text>
<text class="v" x="392.600" y="1001">6:15 hours</text>
<text class="s" x="392.600" y="1017">Record Max</text>
<text class="v" x="484" y="1001" style="fill:#aebac6">00:00:20.649</text>
<text class="s" x="497" y="1017">Seconds</text><path d="M544 1009h8l-4 6z" fill="#808489"/>
<text x="590" y="1004" font-size="19" font-weight="bold" fill="#c9d1d9">00012.02.02.66</text>
<text class="s" x="650" y="1018" style="fill:#748089">Bars</text><path d="M677 1011h8l-4 6z" fill="#808489"/>

<path d="M754 995v14l-10-7zM783 995v14l-9-7zM774 995v14l-9-7zM797 995v14l9-7zM806 995v14l9-7zM823 995v14l10-7zM860 995v14l-10-7z" fill="#bdbdbd"/>
<path d="M849 995v14" stroke="#bdbdbd" stroke-width="1.200"/>
<rect x="881" y="993" width="20" height="20" fill="#2eaedb"/>
<path d="M920 992v21l17-10.500z" fill="#bcbcbc"/>
<circle cx="961" cy="1003" r="10" fill="#c2c2c2"/>
<path d="M1001 1012.500h-8a9 9 0 0 1 0-19h20a9 9 0 0 1 0 19h-6c-1.500-1-1.500-4 0-7" fill="none" stroke="#3fb6e8" stroke-width="2"/>
<path d="M998 1005c1 3 1 5-1 7.500" fill="none" stroke="#3fb6e8" stroke-width="2"/>

<text x="1042" y="1000" font-size="12.500" fill="#3a6d99" text-anchor="middle">L</text>
<text x="1042" y="1015" font-size="12.500" fill="#3a6d99" text-anchor="middle">R</text>
<path d="M1051 994h3v17h-3" fill="none" stroke="#4a4d50"/>
<text x="1059.600" y="1000" font-size="12" fill="#c9d6e3">00009.03.01.00</text>
<text x="1059.600" y="1015" font-size="12" fill="#c9d6e3">00045.01.01.00</text>
<text class="vm" x="1185" y="1001">Off</text><text class="sm" x="1185" y="1017">Sync</text>
<path d="M1213 994h5l2 3h-7M1220 997h7" fill="none" stroke="#a8a8a8"/>
<circle cx="1220" cy="1012" r="3.500" fill="#141516" stroke="#a8a8a8" stroke-width="2.600"/>
<path d="M1220 1006v2.500M1220 1015.500v2.500M1214 1012h2.500M1223.500 1012h2.500M1215.800 1007.800l1.700 1.700M1222.500 1014.500l1.700 1.700M1215.800 1016.200l1.700-1.700M1222.500 1009.500l1.700-1.700" stroke="#a8a8a8" stroke-width="1.500"/>
<path d="M1240.500 991v9" stroke="#a8a8a8" stroke-dasharray="2 1"/><rect x="1243" y="992.500" width="8" height="6" fill="#a8a8a8"/>
<path d="M1243.500 1007.500v9M1250.500 1007.500v9" stroke="#a8a8a8"/><path d="M1244 1012h6" stroke="#a8a8a8" stroke-width="3"/><path d="M1239 1012h2M1253 1012h2" stroke="#a8a8a8"/>
<circle cx="1274" cy="996" r="4.500" fill="#7d8084"/>
<text class="sm" x="1295" y="1017">Metronome</text>
<path d="M1288 989.500c3-.5 5 .5 5.500 2.500l5.500 6.500-2 2-6-6c-2.500 0-4-1.500-3-5z" fill="#a8a8a8"/>
<path d="M1316 990l-5.500 11h11z" fill="#36b0e6"/>
<text class="vm" x="1356" y="1001">3 / 4</text><text class="sm" x="1357" y="1017">Timing</text>
<text class="vm" x="1401.600" y="1001">-</text><text class="sm" x="1401" y="1017">Key</text>
<text class="vm" x="1448" y="1001">100.00</text><text class="sm" x="1448" y="1017">Tempo</text>
<rect x="1485" y="990" width="67" height="4" fill="#3a3c40"/><rect x="1485" y="995.500" width="67" height="4" fill="#3a3c40"/><rect x="1553" y="990" width="22" height="9.500" fill="#2a2c30"/>
<path d="M1485 1011.500H1540" stroke="#5aaedb" stroke-width="9" stroke-dasharray="1 1"/>
<path d="M1540 1011.500H1552" stroke="#55585c" stroke-width="9" stroke-dasharray="1 1"/>
<circle cx="1565" cy="1012" r="4.500" fill="#48b4e6"/><circle cx="1571" cy="1012" r="3.500" fill="#141516" stroke="#48b4e6" stroke-width="1.600"/>
</svg>
</body></html>
